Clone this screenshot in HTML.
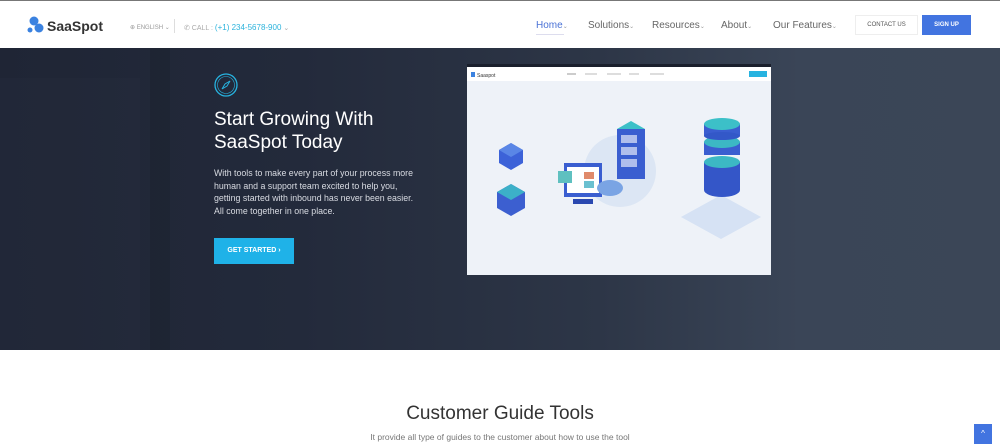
<!DOCTYPE html>
<html><head><meta charset="utf-8"><style>
*{margin:0;padding:0;box-sizing:border-box}
body{width:1000px;height:447px;overflow:hidden;background:#fff;font-family:"Liberation Sans",sans-serif;position:relative}
.top{position:absolute;left:0;top:0;width:1000px;height:1px;background:#777}
.nav{position:absolute;top:1px;left:0;width:1000px;height:47px;background:#fff}
.abs{position:absolute;white-space:nowrap}
.hero{position:absolute;top:48px;left:0;width:1000px;height:302px;background:linear-gradient(90deg,#1f2535 0%,#232a3b 30%,#2d3647 60%,#3a4557 80%,#3b4657 100%);overflow:hidden}
.menu{font-size:10px;color:#666}
.menu i{font-style:normal;font-size:6px;color:#999}
</style></head><body>
<div class="top"></div>
<div class="nav">
 <svg class="abs" style="left:27px;top:15px" width="18" height="18" viewBox="0 0 18 18"><circle cx="7" cy="5" r="4.5" fill="#3b82e0"/><circle cx="12" cy="12" r="4.5" fill="#3b82e0"/><circle cx="3" cy="14" r="2.5" fill="#3b82e0"/></svg>
 <div class="abs" style="left:47px;top:17px;font-size:14px;font-weight:bold;color:#333">SaaSpot</div>
 <div class="abs" style="left:130px;top:23px;font-size:6px;color:#999">⊕ ENGLISH ⌄</div>
 <div class="abs" style="left:174px;top:18px;width:1px;height:14px;background:#ddd"></div>
 <div class="abs" style="left:184px;top:22px;font-size:7px;color:#aaa">✆ CALL : <span style="color:#2cb3dc;font-size:8px">(+1) 234-5678-900</span> ⌄</div>
 <div class="abs menu" style="left:536px;top:19px;color:#4a72d6">Home<i>⌄</i></div>
 <div class="abs" style="left:536px;top:33px;width:28px;height:1px;background:#dde"></div>
 <div class="abs menu" style="left:588px;top:19px">Solutions<i>⌄</i></div>
 <div class="abs menu" style="left:652px;top:19px">Resources<i>⌄</i></div>
 <div class="abs menu" style="left:721px;top:19px">About<i>⌄</i></div>
 <div class="abs menu" style="left:773px;top:19px">Our Features<i>⌄</i></div>
 <div class="abs" style="left:855px;top:14px;width:63px;height:20px;border:1px solid #eee;font-size:6px;color:#555;text-align:center;line-height:19px">CONTACT US</div>
 <div class="abs" style="left:922px;top:14px;width:49px;height:20px;background:#4274e0;font-size:6px;font-weight:bold;color:#fff;text-align:center;line-height:20px">SIGN UP</div>
</div>
<div class="hero">
 <div class="abs" style="left:150px;top:0;width:20px;height:302px;background:#1a1f2c;opacity:.35"></div>
 <div class="abs" style="left:0;top:30px;width:140px;height:272px;background:#283040;opacity:.3"></div>
 <svg class="abs" style="left:214px;top:25px" width="24" height="24" viewBox="0 0 24 24"><circle cx="12" cy="12" r="11" fill="none" stroke="#27b3e0" stroke-width="1.3"/><circle cx="12" cy="12" r="8.5" fill="none" stroke="#27b3e0" stroke-width=".6"/><path d="M16 8L13 13L8 16L11 11Z" fill="none" stroke="#27b3e0" stroke-width="1"/></svg>
 <div class="abs" style="left:214px;top:60px;font-size:19px;line-height:23px;color:#fff">Start Growing With<br>SaaSpot Today</div>
 <div class="abs" style="left:214px;top:119px;font-size:8.8px;line-height:12.7px;color:#d8dbe2">With tools to make every part of your process more<br>human and a support team excited to help you,<br>getting started with inbound has never been easier.<br>All come together in one place.</div>
 <div class="abs" style="left:214px;top:190px;width:80px;height:26px;background:#1fb2e8;color:#fff;font-size:7px;font-weight:bold;text-align:center;line-height:26px">GET STARTED ›</div>
 <div class="abs" style="left:467px;top:16px;width:304px;height:211px;background:#1a1f2c"></div>
 <svg class="abs" style="left:467px;top:19px" width="304" height="208" viewBox="0 0 304 208">
  <rect x="0" y="0" width="304" height="208" fill="#eef2f8"/>
  <rect x="0" y="0" width="304" height="14" fill="#fff"/>
  <text x="10" y="10" font-size="5" fill="#333" font-family="Liberation Sans">Saaspot</text>
  <rect x="4" y="5" width="4" height="5" fill="#3b82e0"/>
  <rect x="100" y="6" width="9" height="2" fill="#ccc"/><rect x="118" y="6" width="12" height="2" fill="#ddd"/><rect x="140" y="6" width="14" height="2" fill="#ddd"/><rect x="162" y="6" width="10" height="2" fill="#ddd"/><rect x="183" y="6" width="14" height="2" fill="#ddd"/>
  <rect x="282" y="4" width="18" height="6" fill="#27b3e0"/>
  <circle cx="153" cy="104" r="36" fill="#dce6f4"/>
  <path d="M44 76l12 7v13l-12 7-12-7v-13z" fill="#3c62d8"/><path d="M44 76l12 7-12 7-12-7z" fill="#5a86e6"/>
  <path d="M44 117l14 8v16l-14 8-14-8v-16z" fill="#3c5fd0"/><path d="M44 117l14 8-14 8-14-8z" fill="#3cb0c8"/>
  <rect x="150" y="62" width="28" height="50" fill="#3a5ed0"/><rect x="154" y="68" width="16" height="8" fill="#fff" opacity=".6"/><rect x="154" y="80" width="16" height="8" fill="#fff" opacity=".6"/><rect x="154" y="92" width="16" height="8" fill="#fff" opacity=".6"/>
  <path d="M150 62l14-8 14 8z" fill="#3cc0c8"/>
  <rect x="97" y="96" width="38" height="34" fill="#3a5ed0"/><rect x="100" y="100" width="32" height="26" fill="#fff"/><rect x="117" y="105" width="10" height="7" fill="#e08a6a"/><rect x="117" y="114" width="10" height="7" fill="#6ac0d0"/><rect x="91" y="104" width="14" height="12" fill="#5fc0c0"/><rect x="106" y="132" width="20" height="5" fill="#2a48b0"/>
  <ellipse cx="143" cy="121" rx="13" ry="8" fill="#7aa4e4"/>
  <path d="M214 150l40-22 40 22-40 22z" fill="#d6e2f4"/>
  <ellipse cx="255" cy="123" rx="18" ry="7" fill="#3456c8"/><rect x="237" y="95" width="36" height="28" fill="#3456c8"/><ellipse cx="255" cy="95" rx="18" ry="6" fill="#3cb8c4"/>
  <rect x="237" y="75" width="36" height="13" fill="#3a5ed0"/><ellipse cx="255" cy="75" rx="18" ry="6" fill="#3cb8c4"/>
  <rect x="237" y="57" width="36" height="12" fill="#3a5ed0"/><ellipse cx="255" cy="57" rx="18" ry="6" fill="#3cc0c8"/><ellipse cx="255" cy="69" rx="18" ry="4" fill="#3358c8"/>
 </svg>
</div>
<div class="abs" style="left:0;top:403px;width:1000px;text-align:center;font-size:19px;color:#333">Customer Guide Tools</div>
<div class="abs" style="left:0;top:432px;width:1000px;text-align:center;font-size:8.5px;color:#777">It provide all type of guides to the customer about how to use the tool</div>
<div class="abs" style="left:974px;top:424px;width:18px;height:20px;background:#4274e0;color:#fff;font-size:8px;text-align:center;line-height:20px">^</div>
</body></html>
